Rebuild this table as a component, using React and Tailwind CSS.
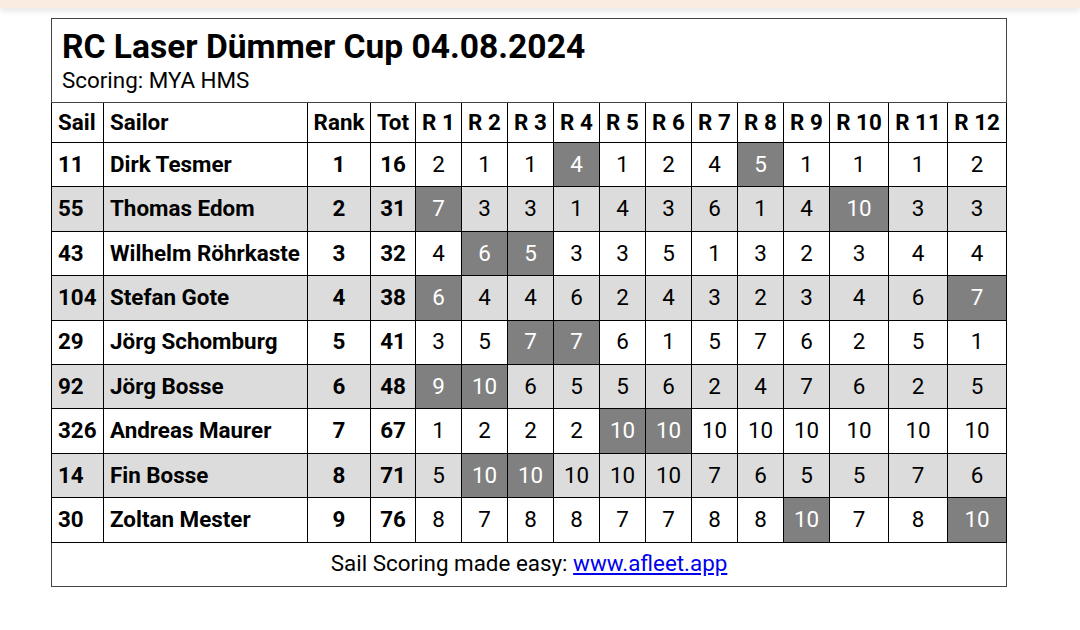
import React from "react";

const rows = [
  ["11", "Dirk Tesmer", 1, 16, "2 1 1 *4 1 2 4 *5 1 1 1 2"],
  ["55", "Thomas Edom", 2, 31, "*7 3 3 1 4 3 6 1 4 *10 3 3"],
  ["43", "Wilhelm Röhrkaste", 3, 32, "4 *6 *5 3 3 5 1 3 2 3 4 4"],
  ["104", "Stefan Gote", 4, 38, "*6 4 4 6 2 4 3 2 3 4 6 *7"],
  ["29", "Jörg Schomburg", 5, 41, "3 5 *7 *7 6 1 5 7 6 2 5 1"],
  ["92", "Jörg Bosse", 6, 48, "*9 *10 6 5 5 6 2 4 7 6 2 5"],
  ["326", "Andreas Maurer", 7, 67, "1 2 2 2 *10 *10 10 10 10 10 10 10"],
  ["14", "Fin Bosse", 8, 71, "5 *10 *10 10 10 10 7 6 5 5 7 6"],
  ["30", "Zoltan Mester", 9, 76, "8 7 8 8 7 7 8 8 *10 7 8 *10"],
];

const widths = [52, 204, 63, 45, 46, 46, 46, 46, 46, 46, 46, 46, 46, 59, 59, 59];

export default function App() {
  return (
    <div className="min-h-[630px] bg-white text-black" style={{ fontFamily: "Roboto, 'Noto Sans', sans-serif" }}>
      <div className="h-[8px] bg-[#fbece2] shadow-[0_3px_6px_rgba(0,0,0,0.10)]" />
      <div className="pl-[51px] pt-[10px]">
        <table className="table-fixed border-collapse border border-[#444] w-[956px]">
          <colgroup>
            {widths.map((w, i) => (
              <col key={i} style={{ width: w }} />
            ))}
          </colgroup>
          <tbody>
            <tr className="h-[84px]">
              <td colSpan={16} className="border border-[#444] pl-[10px] align-top pt-[9px]">
                <div className="text-[33.6px] font-bold leading-[38px]">RC Laser Dümmer Cup 04.08.2024</div>
                <div className="text-[22.4px] leading-[28px]">Scoring: MYA HMS</div>
              </td>
            </tr>
            <tr className="h-[40px] text-[22.4px] font-bold">
              <td className="border border-black pl-[6px]">Sail</td>
              <td className="border border-black pl-[6px]">Sailor</td>
              <td className="border border-black text-center">Rank</td>
              <td className="border border-black text-center">Tot</td>
              {Array.from({ length: 12 }, (_, i) => (
                <td key={i} className="border border-black text-center whitespace-nowrap">
                  R {i + 1}
                </td>
              ))}
            </tr>
            {rows.map(([sail, name, rank, tot, res], ri) => (
              <tr key={ri} className={`h-[44.4px] text-[22.4px] ${ri % 2 === 1 ? "bg-[#dcdcdc]" : "bg-white"}`}>
                <td className="border border-black pl-[6px] font-bold">{sail}</td>
                <td className="border border-black pl-[6px] font-bold whitespace-nowrap">{name}</td>
                <td className="border border-black text-center font-bold">{rank}</td>
                <td className="border border-black text-center font-bold">{tot}</td>
                {res.split(" ").map((v, ci) => {
                  const dis = v.startsWith("*");
                  return (
                    <td
                      key={ci}
                      className={`border border-black text-center ${dis ? "bg-[#808080] text-white" : ""}`}
                    >
                      {dis ? v.slice(1) : v}
                    </td>
                  );
                })}
              </tr>
            ))}
            <tr className="h-[44px]">
              <td colSpan={16} className="border border-[#444] text-center text-[22.4px]">
                Sail Scoring made easy:{" "}
                <a href="#" className="text-[#0000ee] underline">
                  www.afleet.app
                </a>
              </td>
            </tr>
          </tbody>
        </table>
      </div>
    </div>
  );
}
